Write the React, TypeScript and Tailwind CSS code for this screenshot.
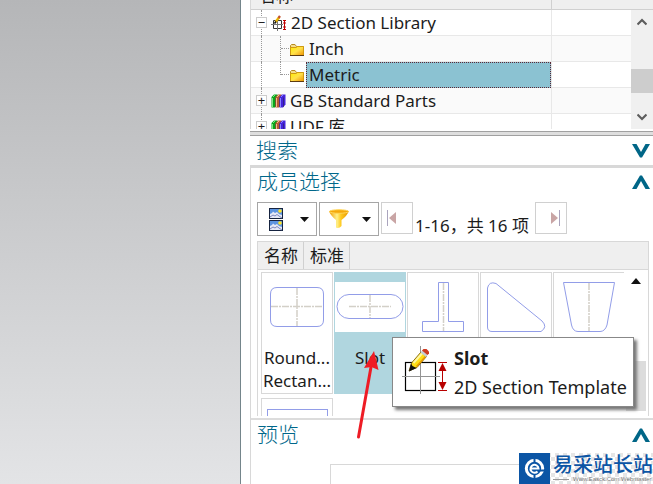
import type { ReactNode } from 'react';

const treeRows = [
  { id: 'section', label: '2D Section Library', depth: 0, toggle: '−', icon: 'section', selected: false },
  { id: 'inch', label: 'Inch', depth: 1, toggle: '', icon: 'folder', selected: false },
  { id: 'metric', label: 'Metric', depth: 1, toggle: '', icon: 'folder', selected: true },
  { id: 'gb', label: 'GB Standard Parts', depth: 0, toggle: '+', icon: 'books', selected: false },
  { id: 'udf', label: 'UDF 库', depth: 0, toggle: '+', icon: 'books', selected: false },
];

const FolderIcon = () => (
  <svg width="14" height="12" viewBox="0 0 14 12" className="mt-0.5 shrink-0">
    <defs>
      <linearGradient id="folder" x1="0" y1="0" x2="1" y2="1">
        <stop offset="0" stopColor="#ffee00" />
        <stop offset="0.5" stopColor="#ffe04a" />
        <stop offset="1" stopColor="#f09000" />
      </linearGradient>
    </defs>
    <path d="M0.5 11.5V1.5L1.5 0.5H5L6.5 2.5H13.5V11.5Z" fill="#f3dc8c" stroke="#b88a20" />
    <path d="M0.5 11.5V3.5H6L7.5 2.5H13.5V11.5Z" fill="url(#folder)" stroke="#d09a10" />
    <path d="M0 11.5H14" stroke="#5c3b10" />
  </svg>
);

const BooksIcon = () => (
  <svg width="15" height="14" viewBox="0 0 15 14" className="shrink-0">
    {[
      { x: 0, fill: '#08a51c', light: '#7be880' },
      { x: 4, fill: '#b95c31', light: '#f5bd91' },
      { x: 8, fill: '#4423dc', light: '#8b86ff' },
    ].map(b => (
      <g key={b.x}>
        <path d={`M${b.x + 0.5} 3L${b.x + 3} 0.5H${b.x + 6.5}V10.5L${b.x + 4} 13.5H${b.x + 0.5}Z`} fill={b.fill} />
        <path d={`M${b.x + 1.5} 4V13M${b.x + 2} 3L${b.x + 4} 1`} stroke={b.light} />
        <path d={`M${b.x + 4.5} 3.5V13`} stroke="#24203a" strokeOpacity="0.5" />
      </g>
    ))}
  </svg>
);

// Square with centre lines, a height dimension and a pencil on its corner
const SectionIcon = ({ className }: { className: string }) => (
  <svg viewBox="0 0 46 48" className={className}>
    <rect x="3.5" y="16.5" width="30" height="28" fill="#fff" stroke="#000" strokeWidth="1.2" />
    <path d="M0 30.5H38M18.5 0V48" stroke="#949494" />
    <path d="M36 16.5H45M36 44.5H45M40.5 20V41" stroke="#b80000" />
    <path d="M40.5 17L44.5 25H36.5ZM40.5 44L44.5 36H36.5Z" fill="#b80000" />
    <path d="M7 25L9.5 17L19 6L24.5 10.5L15 21.5Z" fill="#ffdf16" stroke="#6b4a00" strokeWidth="0.8" />
    <path d="M11.5 17L20 7.500" stroke="#fff7a0" strokeWidth="2" />
    <path d="M14.5 20.500L23.500 10.500" stroke="#e79a00" strokeWidth="1.6" />
    <path d="M7 25.500L9 17.500L10.500 20L14.500 22Z" fill="#111" />
    <path d="M18.500 6.500L20.500 4L26 8.500L24 11Z" fill="#c6cfd2" />
    <path d="M20 4.500L21.500 3H24.500L27 5.500V7.500L25.500 9Z" fill="#cf3a20" />
  </svg>
);

const SmallSectionIcon = () => (
  <svg width="16" height="16" viewBox="0 0 16 16" className="shrink-0">
    <path d="M2.500 5.500H10.500V13.500H2.500Z" fill="#fff" stroke="#333" />
    <path d="M0 9.500H12M6.500 3V16" stroke="#777" />
    <path d="M12 5.500H15M12 14.500H15M13.500 6V14" stroke="#c00000" />
    <path d="M12.500 8.500L13.500 6.500L14.500 8.500M12.500 11.500L13.500 13.500L14.500 11.500" stroke="#c00000" fill="none" />
    <path d="M4.500 7L8 2.500" stroke="#e6b400" strokeWidth="2.4" />
    <path d="M7.500 3L9 1" stroke="#c4512c" strokeWidth="2.4" />
    <path d="M3.500 8.500L5 6.500" stroke="#111" strokeWidth="1.500" />
  </svg>
);

const TreeIcon = ({ name }: { name: string }) => {
  if (name === 'folder') return <FolderIcon />;
  if (name === 'books') return <BooksIcon />;
  return <SmallSectionIcon />;
};

const Chevron = ({ up = false }: { up?: boolean }) => (
  <svg width="18" height="14" viewBox="0 0 18 14" className={up ? 'rotate-180' : ''}>
    <path d="M0 0H4.500L9 8L13.500 0H18L10 13.500H8Z" fill="#006687" />
  </svg>
);

const ScrollChevron = ({ up = false }: { up?: boolean }) => (
  <svg width="10" height="8" viewBox="0 0 10 8" className={up ? '' : 'rotate-180'}>
    <path d="M0.500 6.500L5 2L9.500 6.500" fill="none" stroke="#5d5d5d" strokeWidth="2.2" />
  </svg>
);

const DropArrow = () => (
  <svg width="9" height="5" viewBox="0 0 9 5"><path d="M0 0H9L4.500 5Z" fill="#111" /></svg>
);

const SectionBar = ({ title, up, className = '' }: { title: string; up?: boolean; className?: string }) => (
  <button className={`flex w-full items-center justify-between pl-1.5 pr-[3px] text-[21px] font-light text-[#00678a] ${className}`}>
    {title}
    <Chevron up={up} />
  </button>
);

const Picture = ({ y }: { y: number }) => (
  <g transform={`translate(0 ${y})`}>
    <rect width="14" height="11" fill="#16233f" />
    <rect x="1" y="1" width="12" height="9" fill="#5c94e0" />
    <path d="M1 6L3 5L4 3.500L6 5L8 4L10 6L13 7V10H1Z" fill="#e4e8f6" />
    <path d="M1 9L4 7L6 8L8 6.500L10 8L13 10" stroke="#7d88bd" fill="none" />
    <circle cx="11" cy="3" r="1.800" fill="#ffe526" />
  </g>
);

const Axis = ({ d }: { d: string }) => (
  <path d={d} stroke="#d3d0c8" strokeWidth="1.5" strokeDasharray="7 1 2 1" fill="none" />
);

const shapes: { id: string; outline: string; axis: string; label?: ReactNode; selected?: boolean }[] = [
  {
    id: 'round',
    outline: 'M15 5.500H55Q61.500 5.500 61.500 12V38Q61.500 44.500 55 44.500H15Q8.500 44.500 8.500 38V12Q8.500 5.500 15 5.500Z',
    axis: 'M9 24.500H61M35 6V44',
    label: <>Round...<br />Rectan...</>,
  },
  { id: 'slot', outline: 'M14 12.500H56A12 12 0 0 1 56 36.500H14A12 12 0 0 1 14 12.500Z', axis: 'M14 24.500H56M35 13V36', label: 'Slot', selected: true },
  { id: 'tee', outline: 'M30.500 0.500H40.500V39.500H55.500V49.500H14.500V39.500H30.500Z', axis: 'M35.500 1V49' },
  { id: 'triangle', outline: 'M6.500 6Q8 -1 15 1.500L61 39Q67 45 60 49.500H11Q6.500 49.500 6.500 45Z', axis: '' },
  { id: 'cup', outline: 'M9.500 0.500H60.500L53 43Q51 49.500 46 49.500H24Q19 49.500 17.500 43Z', axis: 'M35 1V49' },
];

const Viewport = () => (
  <div className="w-[241px] shrink-0 border-r border-[#74858b] bg-linear-to-b from-[#b5b6b8] to-[#e3e4e6]" />
);

const LibraryTree = () => (
  <div className="relative h-[129px] shrink-0 overflow-hidden border-l border-[#d8d8d8]">
    <div className="flex h-2.5 items-end border-b border-[#d0d0d0] bg-[#efefef]">
      <div className="flex h-full w-[301px] items-end overflow-hidden border-r border-[#d0d0d0] pl-2">
        <span className="text-[17px] leading-[26px]">名称</span>
      </div>
    </div>
    <div className="flex">
      <ul className="min-w-0 flex-1" role="tree">
        {treeRows.map((row, i) => (
          <li key={row.id} role="treeitem" aria-selected={row.selected} className={`flex h-[26px] border-b border-[#e8e8e8] ${i % 2 ? 'bg-[#fafafa]' : 'bg-white'}`}>
            <div className="relative flex w-[301px] shrink-0 items-center border-r border-[#e8e8e8]">
              <span className="absolute left-2.5 h-[26px] border-l border-dotted border-[#999]" />
              {row.depth === 1 && (
                <span className={`absolute left-[29px] top-0 border-l border-dotted border-[#999] ${row.selected ? 'h-[13px]' : 'h-[26px]'}`} />
              )}
              {row.depth === 1 ? (
                <span className="ml-[30px] mr-px w-2 shrink-0 border-t border-dotted border-[#999]" />
              ) : (
                <button className="relative ml-[5px] mr-1 flex size-[11px] shrink-0 items-center justify-center border border-[#ccc] bg-white text-[13px] leading-none">{row.toggle}</button>
              )}
              <TreeIcon name={row.icon} />
              <span
                className={`flex h-[26px] items-center whitespace-nowrap text-[17px] leading-6 ${row.depth ? 'ml-0.5' : 'ml-1'} ${row.selected ? 'flex-1 border border-dotted border-[#5b2835] bg-[#8bc2d2] pl-0.5' : row.depth ? 'pl-[3px]' : ''}`}
              >
                {row.label}
              </span>
            </div>
          </li>
        ))}
      </ul>
      <div className="flex h-[119px] w-[22px] shrink-0 flex-col items-center bg-[#f0f0f0] pt-2">
        <ScrollChevron up />
        <div className="mt-[43px] h-6 w-full shrink-0 bg-[#cdcdcd]" />
        <div className="mt-5"><ScrollChevron /></div>
      </div>
    </div>
  </div>
);

const Toolbar = () => (
  <div className="flex h-[34px] gap-0.5 pl-1.5">
    <button aria-label="Views" className="flex w-[60px] items-center justify-between border border-[#a6a6a6] pl-[11px] pr-[7px]">
      <svg width="14" height="23" viewBox="0 0 14 23"><Picture y={0} /><Picture y={12} /></svg>
      <DropArrow />
    </button>
    <button aria-label="Filter" className="flex w-[60px] items-center justify-between border border-[#a6a6a6] pl-2 pr-[7px]">
      <svg width="22" height="20" viewBox="0 0 22 20">
        <defs>
          <linearGradient id="funnel">
            <stop offset="0" stopColor="#f09a00" />
            <stop offset="0.4" stopColor="#fff08a" />
            <stop offset="0.6" stopColor="#ffc91d" />
            <stop offset="1" stopColor="#e69500" />
          </linearGradient>
        </defs>
        <path d="M1 2Q11 0 21 2Q19 7 13.500 11V17Q11 20 8 18.500V11Q2 6 1 2Z" fill="url(#funnel)" />
        <ellipse cx="11" cy="2.500" rx="9.500" ry="1.800" fill="#f5a90a" stroke="#ffd75c" />
      </svg>
      <DropArrow />
    </button>
    <button aria-label="First page" className="flex size-8 shrink-0 items-center border border-[#d0d0d0] pl-[5px]">
      <svg width="11" height="16" viewBox="0 0 11 16"><path d="M0.500 0V16" stroke="#aaa4bd" /><path d="M9 2V14L2 8Z" fill="#c9a5a5" /></svg>
    </button>
    <span className="whitespace-nowrap pr-1 pt-3 text-[17px] leading-6">1-16，共 16 项</span>
    <button aria-label="Last page" className="flex size-8 shrink-0 items-center justify-end border border-[#d0d0d0] pr-[5px]">
      <svg width="11" height="16" viewBox="0 0 11 16"><path d="M9.500 0V16" stroke="#aaa4bd" /><path d="M1 2V14L8 8Z" fill="#c9a5a5" /></svg>
    </button>
  </div>
);

const Tooltip = () => (
  <div role="tooltip" className="absolute left-[141px] top-[169px] flex h-[70px] w-[242px] gap-1.5 border border-[#888] bg-white pl-[9px] pt-1.5 text-lg leading-[29px] shadow-[3px_3px_3px_#777]">
    <SectionIcon className="mt-0.5 h-12 w-[46px] shrink-0" />
    <div className="whitespace-nowrap">
      <div className="font-bold">Slot</div>
      <div>2D Section Template</div>
    </div>
  </div>
);

const Members = () => (
  <div className="relative h-[252px] shrink-0 border-b-2 border-[#dcdcdc]">
    <SectionBar title="成员选择" up className="h-[34px] pb-1.5" />
    <Toolbar />
    <div className="ml-1.5 mr-1 mt-[5px] h-[175px] overflow-hidden border-x border-t border-[#d8d8d8]">
      <div className="flex h-7 border-b border-[#d8d8d8] bg-[#efefef] text-[17px] leading-7">
        <span className="w-[46px] border-r border-[#d0d0d0] pl-1.5">名称</span>
        <span className="w-[46px] border-r border-[#d0d0d0] pl-1.5">标准</span>
      </div>
      <div className="flex justify-between">
        <div className="h-[146px] w-[366px] overflow-hidden pl-[3px] pt-0.5">
          <div className="flex gap-px">
            {shapes.map(s => (
              <button
                key={s.id}
                className={`flex h-[122px] w-[72px] shrink-0 flex-col items-center border pt-[9px] text-[17px] leading-[23px] ${s.selected ? 'border-[#b0d6df] bg-[#b0d6df]' : 'border-[#d8d8d8]'}`}
              >
                <svg width="70" height="50" viewBox="0 0 70 50" className="shrink-0 bg-white">
                  <Axis d={s.axis} />
                  <path d={s.outline} stroke="#929de8" fill="none" />
                </svg>
                <span className="mt-3.5">{s.label}</span>
              </button>
            ))}
          </div>
          <button aria-label="Next shape" className="mt-1 flex h-20 w-[72px] border border-[#d8d8d8] pt-2.5">
            <svg width="70" height="52"><rect x="5.500" y="0.500" width="60" height="45" fill="none" stroke="#929de8" /></svg>
          </button>
        </div>
        <div className="flex w-[22px] shrink-0 flex-col pr-0.5 pt-2">
          <svg width="10" height="6" viewBox="0 0 10 6" className="mx-auto"><path d="M0 6L5 0L10 6Z" fill="#111" /></svg>
          <div className="mt-[77px] h-[50px] shrink-0 bg-[#dcdcdc]" />
        </div>
      </div>
    </div>
    <Tooltip />
    <svg width="30" height="90" viewBox="0 0 30 90" className="absolute left-[103px] top-[183px]">
      <path d="M4.500 86L17 16" stroke="#ee1c25" strokeWidth="3" strokeLinecap="round" />
      <path d="M20 0L24.500 19L17.500 16L10 17Z" fill="#ee1c25" />
    </svg>
  </div>
);

const Logo = () => (
  <div className="absolute bottom-0 right-0 flex h-8 w-[134px] bg-[repeating-conic-gradient(#e6e6e6_0_25%,#fff_0_50%)] bg-size-[8px_8px]">
    <svg width="31" height="31" viewBox="0 0 31 31" className="shrink-0">
      <rect width="31" height="31" fill="#0b55a5" />
      <circle cx="15.500" cy="15.500" r="8.200" fill="none" stroke="#fff" strokeWidth="3" />
      <path d="M15.500 4V10M15.500 21V27M20 17.500H27" stroke="#0b55a5" strokeWidth="2" />
      <path d="M11.500 15.500H19.500A4 4 0 1 0 18.500 18.500" fill="none" stroke="#fff" strokeWidth="2" />
    </svg>
    <div className="whitespace-nowrap pl-[3px] font-['Noto_Sans_CJK_SC',sans-serif] text-[#0b55a5]">
      <div className="text-xl font-medium leading-[22px]">易采站长站</div>
      <div className="flex items-center gap-1 pt-px font-['Liberation_Sans',sans-serif] text-[6px] leading-[7px] text-[#777]">
        <span className="w-4 border-t border-[#999]" />
        Www.Easck.Com Webmaster
      </div>
    </div>
  </div>
);

export default function App() {
  return (
    <div className="flex h-screen overflow-hidden bg-white font-['Noto_Sans','Noto_Sans_CJK_SC',sans-serif] text-[#1c1c1c]">
      <Viewport />
      <main className="ml-[9px] flex min-w-0 flex-1 flex-col">
        <LibraryTree />
        <div className="mt-0.5 h-[5px] shrink-0 border-y border-[#a0a0a0] bg-[#dedede]" />
        <SectionBar title="搜索" className="h-[29px] shrink-0" />
        <div className="h-[3px] shrink-0 bg-[#d8d8d8]" />
        <div className="flex flex-1 flex-col border-l border-[#d8d8d8]">
          <Members />
          <div className="relative flex-1">
            <SectionBar title="预览" up className="h-[30px]" />
            <div className="ml-[79px] mt-3.5 border-l border-t border-[#d8d8d8] pt-5" />
            <Logo />
          </div>
        </div>
      </main>
    </div>
  );
}
